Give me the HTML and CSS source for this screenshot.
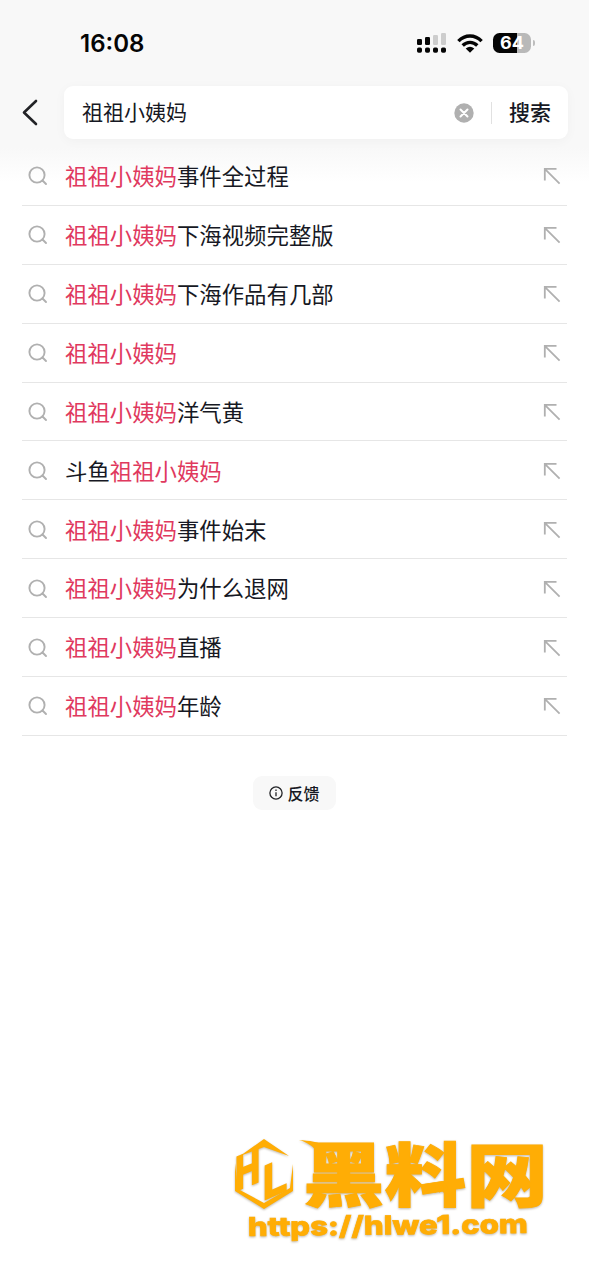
FILE: index.html
```html
<!DOCTYPE html>
<html lang="zh-CN">
<head>
<meta charset="utf-8">
<title>搜索</title>
<link rel="stylesheet" href="styles.css">
</head>
<body>
<svg class="defs" aria-hidden="true">
  <symbol id="search" viewBox="0 0 20 20"><circle cx="9" cy="9" r="7.6"/><path d="M14.5 14.5L18 18"/></symbol>
  <symbol id="fill" viewBox="0 0 18 18"><path d="M1.8 13.5V1.8H13.5M2 2.2L16.6 16.6"/></symbol>
</svg>
<main class="screen">
  <header class="status">
    <time class="clock">16:08</time>
    <div class="indicators">
      <svg class="signal" viewBox="0 0 30 20">
        <g fill="#050505"><rect x="0" y="6" width="5" height="6" rx="1.3"/><rect x="8" y="4" width="5" height="8" rx="1.3"/><rect x="0" y="14.5" width="5" height="5.2" rx="1.7"/><rect x="8" y="14.5" width="5" height="5.2" rx="1.7"/><rect x="16" y="14.5" width="5" height="5.2" rx="1.7"/><rect x="24" y="14.5" width="5" height="5.2" rx="1.7"/></g>
        <g fill="#cdcdcd"><rect x="16" y="2" width="5" height="10" rx="1.3"/><rect x="24" y="0" width="5" height="12" rx="1.3"/></g>
      </svg>
      <svg class="wifi" viewBox="0 0 26 19"><g fill="none" stroke="#050505" stroke-width="3.4"><path d="M1.4 7.1C8 .3 18 .3 24.6 7.1"/><path d="M5.7 11.5C10 7.3 16 7.3 20.3 11.5"/></g><path d="M8.7 14.5Q13 10.8 17.3 14.5L13 18.8Z" fill="#050505"/></svg>
      <div class="battery"><span class="level">64</span><i class="cap"></i></div>
    </div>
  </header>
  <div class="search-row">
    <svg class="back" viewBox="0 0 16 27"><path d="M14 2L2 13.5L14 25"/></svg>
    <div class="search-box">
      <span class="query">祖祖小姨妈</span>
      <svg class="clear" viewBox="0 0 20 20"><circle cx="10" cy="10" r="9.7"/><path d="M6.5 6.5l7 7M13.5 6.5l-7 7"/></svg>
      <i class="divider"></i>
      <span class="submit">搜索</span>
    </div>
  </div>
  <ul class="list">
    <li class="item"><svg class="glass"><use href="#search"/></svg><span class="text"><em>祖祖小姨妈</em>事件全过程</span><svg class="arrow"><use href="#fill"/></svg></li>
    <li class="item"><svg class="glass"><use href="#search"/></svg><span class="text"><em>祖祖小姨妈</em>下海视频完整版</span><svg class="arrow"><use href="#fill"/></svg></li>
    <li class="item"><svg class="glass"><use href="#search"/></svg><span class="text"><em>祖祖小姨妈</em>下海作品有几部</span><svg class="arrow"><use href="#fill"/></svg></li>
    <li class="item"><svg class="glass"><use href="#search"/></svg><span class="text"><em>祖祖小姨妈</em></span><svg class="arrow"><use href="#fill"/></svg></li>
    <li class="item"><svg class="glass"><use href="#search"/></svg><span class="text"><em>祖祖小姨妈</em>洋气黄</span><svg class="arrow"><use href="#fill"/></svg></li>
    <li class="item"><svg class="glass"><use href="#search"/></svg><span class="text">斗鱼<em>祖祖小姨妈</em></span><svg class="arrow"><use href="#fill"/></svg></li>
    <li class="item"><svg class="glass"><use href="#search"/></svg><span class="text"><em>祖祖小姨妈</em>事件始末</span><svg class="arrow"><use href="#fill"/></svg></li>
    <li class="item"><svg class="glass"><use href="#search"/></svg><span class="text"><em>祖祖小姨妈</em>为什么退网</span><svg class="arrow"><use href="#fill"/></svg></li>
    <li class="item"><svg class="glass"><use href="#search"/></svg><span class="text"><em>祖祖小姨妈</em>直播</span><svg class="arrow"><use href="#fill"/></svg></li>
    <li class="item"><svg class="glass"><use href="#search"/></svg><span class="text"><em>祖祖小姨妈</em>年龄</span><svg class="arrow"><use href="#fill"/></svg></li>
  </ul>
  <div class="feedback">
    <svg class="info" viewBox="0 0 14 14"><circle cx="7" cy="7" r="6.1"/><path d="M7 6.2V10.3M7 3.6V4.9"/></svg>
    <span>反馈</span>
  </div>
  <aside class="watermark">
    <svg class="mark" viewBox="0 0 310 112">
      <g fill="#ffad05">
        <path d="M6 18L30 1L55 18L30 9Z"/>
        <path d="M1 25V53L30 71L59 53V26L56 50L30 65L4 51Z"/>
        <text class="emblem" transform="matrix(1.02 -.42 0 1.4 1 53)">H</text>
        <text class="emblem" transform="matrix(1.15 -.5 0 1.4 29 62)">L</text>
        <path d="M65 2C75 3 85 3 92 9L84 15C79 8 73 4 65 2Z"/>
      </g>
      <text class="brand" transform="matrix(1.02 0 0 .87 69 63)">黑料网</text>
      <path class="braid" d="M193 54l4-4-3-4M197 54l4-4-3-4M201 54l4-4-3-4M205 54l4-4-3-4M209 54l4-4-3-4"/>
      <text class="url" transform="rotate(-.6 14 98)" x="14" y="98" textLength="280" lengthAdjust="spacingAndGlyphs">https://hlwe1.com</text>
    </svg>
  </aside>
</main>
</body>
</html>
```
FILE: styles.css
```css
* { box-sizing: border-box; }
body {
  margin: 0;
  background: #fff;
  color: #161823;
  font-family: "Noto Sans CJK SC", sans-serif;
}
.defs { position: absolute; width: 0; height: 0; }
.screen {
  display: flex;
  flex-direction: column;
  width: 589px;
  height: 1280px;
  background: linear-gradient(#f8f8f8 0, #f8f8f8 148px, #fff 182px);
}
.status {
  display: flex;
  justify-content: space-between;
  align-items: center;
  height: 86px;
  padding: 2px 54px 0 80px;
}
.clock {
  font: 600 24px/30px Inter, sans-serif;
  color: #050505;
  letter-spacing: 0;
}
.indicators { display: flex; align-items: center; gap: 10px; margin-top: -2px; }
.signal { width: 30px; height: 20px; }
.wifi { width: 26px; height: 19px; }
.battery { display: flex; align-items: center; gap: 2px; }
.level {
  width: 38px;
  height: 20px;
  border-radius: 6.5px;
  background: linear-gradient(90deg, #050505 64%, #b9b9b9 64%);
  color: #fff;
  font: 700 18px/20px Inter, sans-serif;
  text-align: center;
}
.cap { width: 2px; height: 6px; border-radius: 0 2px 2px 0; background: #bdbdbd; }
.search-row {
  display: flex;
  align-items: center;
  gap: 26px;
  height: 53px;
  padding: 0 21px 0 22px;
}
.back { width: 16px; height: 27px; flex: none; fill: none; stroke: #222326; stroke-width: 2.6; stroke-linecap: round; stroke-linejoin: round; }
.search-box {
  display: flex;
  align-items: center;
  flex: 1;
  height: 53px;
  padding: 0 17px 0 18px;
  border-radius: 9px;
  background: #fff;
  box-shadow: 0 2px 12px rgba(0, 0, 0, .035);
}
.query { flex: 1; font-size: 21px; line-height: 30px; padding-bottom: 3px; }
.clear { width: 20px; height: 20px; fill: #b0b0b0; }
.clear path { stroke: #fff; stroke-width: 2; stroke-linecap: round; }
.divider { width: 1px; height: 22px; margin: 0 17px; background: #e1e1e1; }
.submit { font-size: 21px; font-weight: 500; line-height: 30px; padding-bottom: 3px; }
.list { margin: 0; padding: 8px 22px 0; list-style: none; }
.item {
  display: flex;
  align-items: center;
  height: 58.9px;
  padding: 1px 6px 0;
  border-bottom: 1px solid #e6e6e6;
}
.glass { width: 20px; height: 20px; margin-right: 17px; fill: none; stroke: #b0b0b0; stroke-width: 1.9; stroke-linecap: round; }
.text { flex: 1; font-size: 22.4px; line-height: 32px; padding-bottom: 2.5px; }
.text em { color: #e0395e; font-style: normal; }
.arrow { width: 18px; height: 18px; fill: none; stroke: #b0b0b0; stroke-width: 1.8; }
.feedback {
  display: flex;
  align-items: center;
  justify-content: center;
  gap: 4px;
  align-self: center;
  width: 83px;
  height: 34px;
  margin-top: 40px;
  border-radius: 9px;
  background: #f8f8f8;
  font-size: 16px;
  font-weight: 500;
}
.info { width: 14px; height: 14px; fill: none; stroke: #222326; stroke-width: 1.3; }
.watermark { align-self: flex-end; margin: auto 45px 30px 0; height: 112px; }
.mark { display: block; width: 310px; height: 112px; overflow: visible; filter: drop-shadow(0 1.5px 1px rgba(90, 75, 50, .4)); }
.emblem { font: 700 34px "Liberation Sans", sans-serif; stroke: #ffad05; stroke-width: 1.6; }
.brand { font: 900 80px "Noto Sans CJK SC", sans-serif; fill: #ffad05; stroke: #ffad05; stroke-width: 1; }
.url { font: 800 26px Inter, sans-serif; fill: #ffad05; stroke: #ffad05; stroke-width: .7; }
.braid { fill: none; stroke: #ffad05; stroke-width: 1.8; }
```
